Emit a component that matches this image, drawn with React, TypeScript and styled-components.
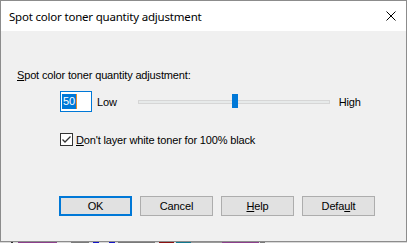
import React from "react";
import styled, { createGlobalStyle } from "styled-components";

const GlobalStyle = createGlobalStyle`
  html, body {
    margin: 0;
    padding: 0;
    background: #ffffff;
  }
  body {
    width: 407px;
    height: 243px;
    overflow: hidden;
  }
`;

const Screen = styled.div`
  width: 407px;
  height: 243px;
  display: flex;
  flex-direction: column;
  font-family: "Liberation Sans", Arial, sans-serif;
  font-size: 11px;
  letter-spacing: -0.15px;
  color: #000000;
`;

const Window = styled.div`
  box-sizing: border-box;
  width: 407px;
  height: 242px;
  border: 1px solid #8c8c8c;
  display: flex;
  flex-direction: column;
  background: #f0f0f0;
`;

const TitleBar = styled.div`
  height: 30px;
  background: #ffffff;
  display: flex;
  align-items: center;
  justify-content: space-between;
  padding: 0 10px 0 8px;
`;

const Title = styled.span`
  font-family: "Noto Sans", "Segoe UI", sans-serif;
  font-size: 11.5px;
  letter-spacing: -0.2px;
  color: #000000;
`;

const CloseIcon = styled.svg`
  width: 10px;
  height: 10px;
`;

const Body = styled.div`
  flex: 1;
  display: flex;
  flex-direction: column;
  padding: 38px 0 0 16px;
`;

const Label = styled.div`
  line-height: 13px;
`;

const Mnemonic = styled.span`
  text-decoration: underline;
  text-underline-offset: 1px;
`;

const SliderRow = styled.div`
  display: flex;
  align-items: center;
  margin: 9px 0 0 43px;
  height: 21px;
`;

const EditBox = styled.div`
  box-sizing: border-box;
  width: 32px;
  height: 21px;
  border: 1px solid #0078d7;
  background: #ffffff;
  display: flex;
  align-items: center;
  padding-left: 1px;
`;

const Selected = styled.span`
  background: #0078d7;
  color: #ffffff;
  line-height: 15px;
  padding: 0 1px;
  border-right: 1px solid #e98b2a;
`;

const SideText = styled.span<{ $gap: number }>`
  margin-left: ${({ $gap }) => $gap}px;
`;

const Track = styled.div`
  position: relative;
  box-sizing: border-box;
  width: 192px;
  height: 4px;
  margin-left: 21px;
  border: 1px solid #d6d6d6;
  background: #e7eaea;
`;

const Thumb = styled.div`
  position: absolute;
  top: -7px;
  width: 6px;
  height: 14px;
  background: #0078d7;
`;

const CheckRow = styled.label`
  display: flex;
  align-items: center;
  margin: 21px 0 0 43px;
  gap: 3px;
`;

const CheckBox = styled.div`
  box-sizing: border-box;
  width: 13px;
  height: 13px;
  border: 1px solid #333333;
  background: #ffffff;
  display: flex;
  align-items: center;
  justify-content: center;
`;

const ButtonRow = styled.div`
  display: flex;
  gap: 8px;
  margin: 50px 0 0 42px;
`;

const Button = styled.div<{ $primary?: boolean }>`
  box-sizing: border-box;
  width: 73px;
  height: 20px;
  display: flex;
  align-items: center;
  justify-content: center;
  background: #e1e1e1;
  border: ${({ $primary }) => ($primary ? "2px solid #0078d7" : "1px solid #adadad")};
`;

const TaskStrip = styled.div`
  height: 1px;
  display: flex;
  background: #d9d9d9;
`;

const Segment = styled.div<{ $w: number; $c: string }>`
  width: ${({ $w }) => $w}px;
  background: ${({ $c }) => $c};
`;

const segments: [number, string][] = [
  [11, "#d9d9d9"],
  [2, "#303030"],
  [5, "#d9d9d9"],
  [39, "#8c3f8c"],
  [14, "#d9d9d9"],
  [18, "#7a7a7a"],
  [4, "#d9d9d9"],
  [6, "#1414c8"],
  [10, "#d9d9d9"],
  [6, "#1414c8"],
  [3, "#d9d9d9"],
  [37, "#7a7a7a"],
  [4, "#d9d9d9"],
  [15, "#8c1010"],
  [2, "#d9d9d9"],
  [15, "#107890"],
  [31, "#9a9a9a"],
  [37, "#8c3f8c"],
  [1, "#d9d9d9"],
  [5, "#7a7a7a"],
];

const App: React.FC = () => {
  const value = 50;
  const trackWidth = 192;
  const thumbLeft = Math.round((value / 100) * (trackWidth - 6));

  return (
    <>
      <GlobalStyle />
      <Screen>
        <Window>
          <TitleBar>
            <Title>Spot color toner quantity adjustment</Title>
            <CloseIcon viewBox="0 0 10 10">
              <path d="M0.5 0.5 L9.5 9.5 M9.5 0.5 L0.5 9.5" stroke="#000" strokeWidth="1" fill="none" />
            </CloseIcon>
          </TitleBar>
          <Body>
            <Label>
              <Mnemonic>S</Mnemonic>pot color toner quantity adjustment:
            </Label>
            <SliderRow>
              <EditBox>
                <Selected>{value}</Selected>
              </EditBox>
              <SideText $gap={5}>Low</SideText>
              <Track>
                <Thumb style={{ left: thumbLeft }} />
              </Track>
              <SideText $gap={9}>High</SideText>
            </SliderRow>
            <CheckRow>
              <CheckBox>
                <svg width="11" height="11" viewBox="0 0 11 11">
                  <path d="M1.5 5.5 L4 8 L9.5 2.5" stroke="#333" strokeWidth="1.3" fill="none" />
                </svg>
              </CheckBox>
              <span>
                <Mnemonic>D</Mnemonic>on't layer white toner for 100% black
              </span>
            </CheckRow>
            <ButtonRow>
              <Button $primary>OK</Button>
              <Button>Cancel</Button>
              <Button>
                <span>
                  <Mnemonic>H</Mnemonic>elp
                </span>
              </Button>
              <Button>
                <span>
                  Defa<Mnemonic>u</Mnemonic>lt
                </span>
              </Button>
            </ButtonRow>
          </Body>
        </Window>
        <TaskStrip>
          {segments.map(([w, c], i) => (
            <Segment key={i} $w={w} $c={c} />
          ))}
        </TaskStrip>
      </Screen>
    </>
  );
};

export default App;
